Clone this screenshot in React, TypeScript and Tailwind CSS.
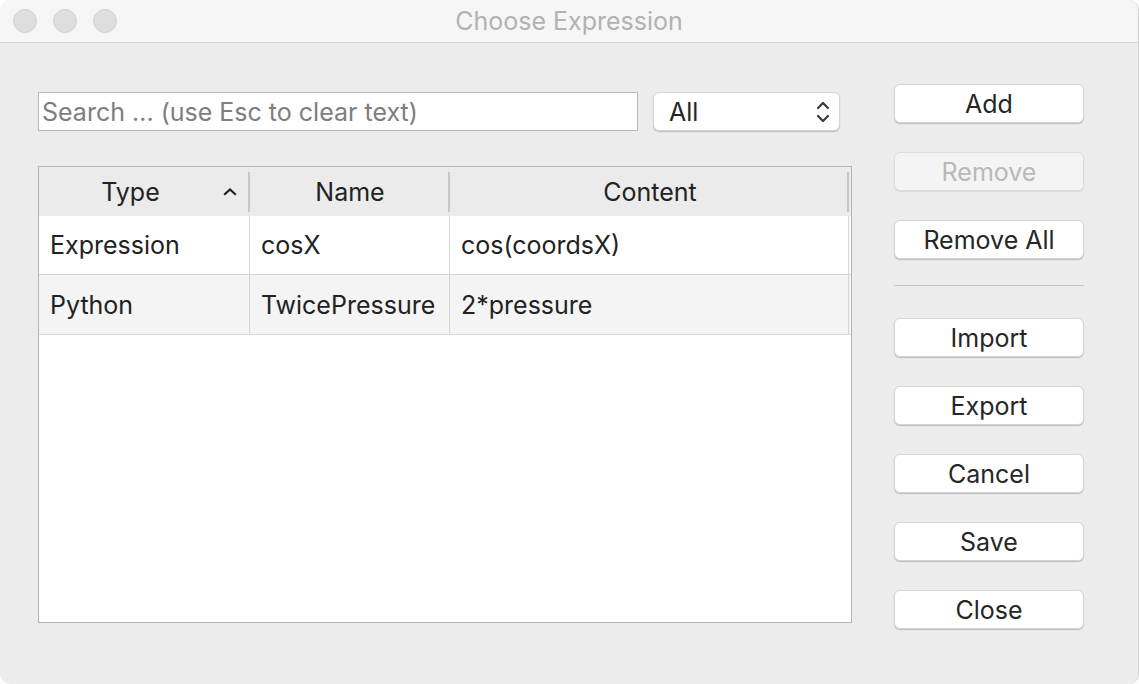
import React from 'react';

const font = { fontFamily: 'Inter, "Liberation Sans", sans-serif' };

const rows = [
    { type: 'Expression', name: 'cosX', content: 'cos(coordsX)' },
    { type: 'Python', name: 'TwicePressure', content: '2*pressure' },
];

const MacButton: React.FC<{ label: string; disabled?: boolean }> = ({ label, disabled }) => (
    <button
        type="button"
        className={
            disabled
                ? 'h-[39px] w-full rounded-[6px] bg-[#f4f4f4] border border-[#dcdcdc] text-[25px] leading-none pt-[2px] text-[#b9b9b9] shadow-[0_1px_1px_rgba(0,0,0,0.08)]'
                : 'h-[39px] w-full rounded-[6px] bg-white border border-[#d4d4d4] text-[25px] leading-none pt-[2px] text-[#262626] shadow-[0_1px_1px_rgba(0,0,0,0.2)]'
        }
    >
        {label}
    </button>
);

export default function App() {
    return (
        <div className="w-[1139px] h-[684px] bg-white overflow-hidden" style={font}>
            <div className="w-full h-full rounded-t-[10px] rounded-b-[10px] border-r border-[#cfcfcf] bg-[#ececec] overflow-hidden flex flex-col">
                {/* Title bar */}
                <div className="h-[43px] shrink-0 bg-[#f6f6f6] border-b border-[#d4d4d4] flex items-center relative">
                    <div className="flex gap-[16px] pl-[13px]">
                        <span className="w-[24px] h-[24px] rounded-full bg-[#dedede] border border-[#d2d2d2]" />
                        <span className="w-[24px] h-[24px] rounded-full bg-[#dedede] border border-[#d2d2d2]" />
                        <span className="w-[24px] h-[24px] rounded-full bg-[#dedede] border border-[#d2d2d2]" />
                    </div>
                    <div className="absolute inset-0 pt-[2px] flex items-center justify-center text-[25px] text-[#b2b2b2]">
                        Choose Expression
                    </div>
                </div>

                {/* Body */}
                <div className="flex flex-1 pl-[38px]">
                    {/* Left column */}
                    <div className="w-[814px] pt-[49px] flex flex-col">
                        <div className="flex items-center gap-[15px]">
                            <div className="w-[600px] h-[39px] bg-white border border-[#b9b9b9] flex items-center pl-[3px] pt-[2px] text-[25px] text-[#7e7e7e]">
                                Search ... (use Esc to clear text)
                            </div>
                            <div className="w-[187px] h-[39px] bg-white rounded-[6px] border border-[#d4d4d4] shadow-[0_1px_1px_rgba(0,0,0,0.2)] flex items-center justify-between pl-[15px] pr-[8px] text-[25px] text-[#262626]">
                                <span className="pt-[2px]">All</span>
                                <svg width="16" height="26" viewBox="0 0 16 26" fill="none" stroke="#3a3a3a" strokeWidth="2.2" strokeLinecap="round" strokeLinejoin="round">
                                    <path d="M3 9 L8 4 L13 9" />
                                    <path d="M3 17 L8 22 L13 17" />
                                </svg>
                            </div>
                        </div>

                        {/* Table */}
                        <div className="mt-[35px] h-[457px] bg-white border border-[#b4b4b4] flex flex-col text-[25px] text-[#222]">
                            <div className="h-[49px] shrink-0 bg-[#ebebeb] grid grid-cols-[211px_200px_399px] items-center">
                                <div className="flex items-center h-full relative">
                                    <span className="flex-1 text-center pr-[28px] pt-[2px]">Type</span>
                                    <svg className="absolute left-[183px]" width="16" height="12" viewBox="0 0 16 12" fill="none" stroke="#222" strokeWidth="2.2" strokeLinecap="square">
                                        <path d="M3 8 L8 3.5 L13 8" />
                                    </svg>
                                    <span className="absolute right-0 top-[5px] bottom-[4px] w-[2px] bg-[#c6c6c6]" />
                                </div>
                                <div className="flex items-center justify-center h-full relative">
                                    <span className="pt-[2px]">Name</span>
                                    <span className="absolute right-0 top-[5px] bottom-[4px] w-[2px] bg-[#c6c6c6]" />
                                </div>
                                <div className="flex items-center justify-center h-full relative">
                                    <span className="pl-[1px] pt-[2px]">Content</span>
                                    <span className="absolute right-0 top-[5px] bottom-[4px] w-[2px] bg-[#c6c6c6]" />
                                </div>
                            </div>
                            {rows.map((r, i) => (
                                <div
                                    key={r.name}
                                    className={`grid grid-cols-[211px_200px_399px] border-b border-[#d6d6d6] ${i % 2 === 0 ? 'h-[59px] bg-white' : 'h-[60px] bg-[#f3f4f3]'}`}
                                >
                                    <div className="flex items-center pl-[11px] pt-[2px] border-r border-[#d6d6d6]">{r.type}</div>
                                    <div className="flex items-center pl-[11px] pt-[2px] border-r border-[#d6d6d6]">{r.name}</div>
                                    <div className="flex items-center pl-[11px] pt-[2px] border-r border-[#d6d6d6]">{r.content}</div>
                                </div>
                            ))}
                        </div>
                    </div>

                    {/* Right column */}
                    <div className="ml-[42px] w-[190px] pt-[41px] flex flex-col">
                        <MacButton label="Add" />
                        <div className="h-[29px]" />
                        <MacButton label="Remove" disabled />
                        <div className="h-[29px]" />
                        <MacButton label="Remove All" />
                        <div className="h-[26px]" />
                        <div className="h-[1px] bg-[#c8c8c8]" />
                        <div className="h-[32px]" />
                        <MacButton label="Import" />
                        <div className="h-[29px]" />
                        <MacButton label="Export" />
                        <div className="h-[29px]" />
                        <MacButton label="Cancel" />
                        <div className="h-[29px]" />
                        <MacButton label="Save" />
                        <div className="h-[29px]" />
                        <MacButton label="Close" />
                    </div>
                </div>
            </div>
        </div>
    );
}
